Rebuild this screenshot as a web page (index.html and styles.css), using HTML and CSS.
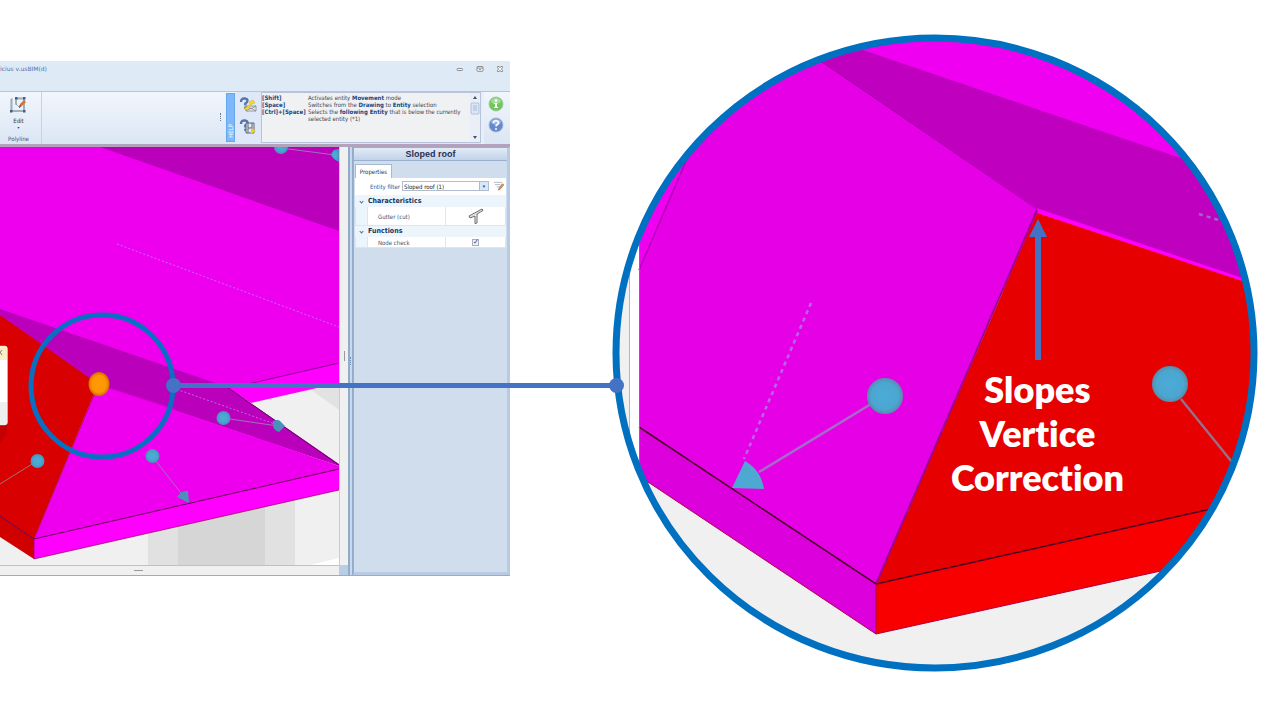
FILE: index.html
```html
<!DOCTYPE html>
<html lang="en">
<head>
<meta charset="utf-8">
<title>Slopes Vertice Correction</title>
<link rel="stylesheet" href="styles.css">
</head>
<body>
<main class="slide">
  <section class="window" aria-label="Edificius">
    <header class="titlebar">
      <span class="app-title">icius v.usBIM(d)</span>
      <div class="window-controls">
        <button type="button" aria-label="Minimize"><svg viewBox="0 0 8 8"><rect x="1" y="3.5" width="5.5" height="2" rx=".7"/></svg></button>
        <button type="button" aria-label="Restore"><svg viewBox="0 0 8 8"><rect x="1" y="1.5" width="6" height="4.8" rx=".7"/><path d="M1 3h6M3 4.5h2"/></svg></button>
        <button type="button" aria-label="Close"><svg viewBox="0 0 8 8"><path d="M1.5 1.5h1.7L4 2.7l.8-1.2h1.7v1.2L5.3 4l1.2 1.3v1.2H4.8L4 5.3l-.8 1.2H1.5V5.3L2.7 4 1.5 2.7z"/></svg></button>
      </div>
    </header>

    <div class="ribbon">
      <div class="ribbon-group">
        <button type="button" class="edit-button">
          <svg class="edit-icon" viewBox="0 0 18 18"><path d="M2 2v13h13M6 3h8v11M6 3v5l4 4" fill="none" stroke="#99a8b8"/><path d="M1 3v12h13V2H6v7" fill="none" stroke="#677785" stroke-width=".7"/><g fill="#3b6387"><rect x="5" y="1" width="2.5" height="2.5"/><rect x="13" y="1" width="2.5" height="2.5"/><rect x="0" y="14" width="2.5" height="2.5"/><rect x="13" y="14" width="2.5" height="2.5"/></g><path d="M9 12l1-4 4-4 2 2-4 4z" fill="#d77432"/><path d="M9 12l1-3 1 1z" fill="#493930"/></svg>
          <span>Edit</span><span class="drop">▾</span>
        </button>
        <span class="group-name">Polyline</span>
      </div>
      <span class="grip" aria-hidden="true"></span>
      <div class="help-strip"><span>HELP</span></div>
      <div class="help-tools">
        <button type="button" aria-label="Send a question"><svg viewBox="0 0 18 16"><path d="M2 5q0-4 4-3.5c4 .5 2.5 4 .3 5v2" fill="none" stroke="#5774ad" stroke-width="2.4"/><circle cx="6.3" cy="10.7" r="1.3" fill="#5774ad"/><path d="M7 9h10v5H7zM7 14l5-3 5 3M7 9l5 3 5-3" fill="#eee" stroke="#777" stroke-width=".7"/><path d="M5 12l6-5-1-2 4-2 2 3-3 1-5 6z" fill="#f3d52c" stroke="#c7aa23" stroke-width=".4"/></svg></button>
        <button type="button" aria-label="Video help"><svg viewBox="0 0 18 16"><path d="M2 5q0-4 4-3.5c4 .5 2.5 4 .3 5v2" fill="none" stroke="#5774ad" stroke-width="2.4"/><circle cx="6.3" cy="10.7" r="1.3" fill="#5774ad"/><path d="M7 4h8v10H7zM9 4v10M13 4v10M9 9h4" fill="#e6e9ef" stroke="#5c6578"/><path d="M12 9l5 3-5 3z" fill="#f5c929"/></svg></button>
      </div>
      <div class="help-box">
        <div class="help-text">
          <b>[Shift]</b><span>Activates entity <b>Movement</b> mode</span>
          <b>[Space]</b><span>Switches from the <b>Drawing</b> to <b>Entity</b> selection</span>
          <b>[Ctrl]+[Space]</b><span>Selects the <b>following Entity</b> that is below the currently selected entity (*1)</span>
        </div>
        <div class="scrollbar"><svg viewBox="0 0 10 49" preserveAspectRatio="none"><rect width="10" height="49" fill="#e9eef7"/><path d="M3 6l2-3 2 3zM3 43l2 3 2-3z" fill="#435069"/><rect x="1" y="10" width="8" height="11" rx="1" fill="#dce6f5" stroke="#9db1d0" stroke-width=".7"/><path d="M3 13h4M3 15h4M3 17h4" stroke="#8da0c0" stroke-width=".6"/></svg></div>
      </div>
      <div class="info-tools">
        <button type="button" aria-label="Information"><svg viewBox="0 0 16 16"><circle cx="8" cy="8" r="7" fill="#72c65c" stroke="#a4c9a7"/><ellipse cx="8" cy="5" rx="5" ry="3" fill="#a2dc95"/><circle cx="8" cy="4.5" r="1.3" fill="#fff"/><path d="M6 7h3v4h1v1H6v-1h1V8H6z" fill="#fff"/></svg></button>
        <button type="button" aria-label="Help"><svg viewBox="0 0 16 16"><circle cx="8" cy="8" r="7" fill="#6488cb" stroke="#a5b7da"/><ellipse cx="8" cy="5" rx="5" ry="3" fill="#9bb4e0"/><path d="M5.5 6q0-2.2 2.5-2.2T10.5 6q0 1-1.4 1.8-1.1.6-1.1 1.8" fill="none" stroke="#fff" stroke-width="1.6"/><circle cx="8" cy="12" r="1" fill="#fff"/></svg></button>
      </div>
    </div>

    <div class="workspace">
      <div class="viewport">
        <svg class="scene" viewBox="0 147 339 418" preserveAspectRatio="none" role="img" aria-label="Roof model">
          <defs>
            <radialGradient id="ball"><stop offset="0" stop-color="#4cafd9"/><stop offset=".65" stop-color="#49a5cf"/><stop offset="1" stop-color="#4991b8"/></radialGradient>
            <radialGradient id="orange"><stop offset="0" stop-color="#ff9c00"/><stop offset=".7" stop-color="#ff9500"/><stop offset="1" stop-color="#cf6d00"/></radialGradient>
          </defs>
          <rect y="147" width="339" height="418" fill="#f0f0f0"/>
          <path d="M148 500h30v65h-30zM265 500h30v65h-30z" fill="#e1e1e1"/>
          <path d="M178 500h87v65h-87z" fill="#d6d6d6"/>
          <path d="M310 389l29-7v28z" fill="#e2e2e2"/>
          <path d="M310 565l29-7v7z" fill="#fff"/>
          <path d="M0 147h339v216l-111 26L0 312z" fill="#ee00ee"/>
          <path d="M100 147h239v84z" fill="#bb00bb"/>
          <path d="M339 363l-111 25 23 15 88-20z" fill="#ff00ff"/>
          <path d="M339 363l-91 21" stroke="#8c008c" fill="none"/>
          <path d="M0 309l227 78 112 77v2L98 385 0 316z" fill="#bb00bb"/>
          <path d="M227 387l112 78" stroke="#660066" fill="none"/>
          <path d="M98 384l241 82v3L34 539z" fill="#ee00ee"/>
          <path d="M105 387l70 22" stroke="#d800d8" fill="none"/>
          <path d="M34 539l305-70v21L34 559z" fill="#ff00ff"/>
          <path d="M0 315l98 69-64 155-34-23z" fill="#d80000"/>
          <path d="M0 516l34 23v20L0 537z" fill="#d00000"/>
          <path d="M0 516l34 23 305-70" fill="none" stroke="#650050"/>
          <path d="M34 539v20l305-69M98 385L34 539" fill="none" stroke="#98004d" stroke-width=".7"/>
          <g fill="none" stroke="#c080ff" stroke-width=".8" stroke-dasharray="2 2"><path d="M117 244l222 83"/><path d="M173 388l102 36"/></g>
          <g fill="none" stroke="#9d72b9"><path d="M281 148l54 7M223 418l55 8M152 456l32 41"/><path d="M0 484l37-23" stroke="#997575"/></g>
          <g fill="url(#ball)"><circle cx="281" cy="147" r="7"/><circle cx="223.500" cy="418" r="7"/><circle cx="152.500" cy="456" r="7"/><circle cx="37.500" cy="461" r="7"/><path d="M339 149q-7 0-8 6 3 5 8 7z"/><path d="M273 421q5-2 7 0l5 5-6 6q-7-1-6-11zM177 497q4-7 11-6l1 12z"/></g>
          <path d="M0 425q5-2 7-8V432L0 444z" fill="#c40000"/>
          <rect x="-8" y="346" width="15.500" height="79" rx="3" fill="#fff" stroke="#d2caca" stroke-width=".5"/>
          <path d="M0 346h5q2 0 2 3v11H0z" fill="#f9edca"/><path d="M0 402h7v20q0 3-3 3H0z" fill="#eee"/>
          <path d="M-2 350l4 5M2 350l-4 5" stroke="#665f50" stroke-width=".8"/>
          <ellipse cx="99" cy="384" rx="10.500" ry="12" fill="url(#orange)"/>
        </svg>
        <div class="v-handle" aria-hidden="true"></div>
        <div class="h-handle" aria-hidden="true"></div>
        <div class="corner" aria-hidden="true"></div>
      </div>
      <div class="splitter" aria-hidden="true"></div>
      <aside class="panel">
        <h2>Sloped roof</h2>
        <div class="tabs"><button type="button">Properties</button></div>
        <div class="filter">
          <label for="entity">Entity filter</label>
          <div class="select-wrap"><select id="entity"><option>Sloped roof (1)</option></select></div>
          <button type="button" aria-label="Edit filter"><svg viewBox="0 0 12 10"><path d="M1 1h9M2 3.5h6M4 6h4M5 8.5h2" stroke="#9aa1a9" stroke-width=".8"/><path d="M6 9.5l1-3 3-4 2 1-4 5z" fill="#db9252" stroke="#806657" stroke-width=".5"/></svg></button>
        </div>
        <table class="properties">
          <colgroup><col class="col-fold"><col class="col-name"><col></colgroup>
          <tbody>
            <tr class="section"><th><span class="chevron"></span></th><th colspan="2">Characteristics</th></tr>
            <tr class="gutter"><td></td><td>Gutter (cut)</td><td><svg viewBox="0 0 16 16"><path d="M1 8L14 1l1 1.500-6 3.500v9l-2 .5V8l-5 2z" fill="#f7f7f7" stroke="#444" stroke-width=".8"/><path d="M2 9l12-6.500M8 8v7" stroke="#aaa" stroke-width=".5"/></svg></td></tr>
            <tr class="section"><th><span class="chevron"></span></th><th colspan="2">Functions</th></tr>
            <tr><td></td><td><label for="node">Node check</label></td><td><input id="node" type="checkbox" checked></td></tr>
          </tbody>
        </table>
      </aside>
    </div>
  </section>

  <figure class="detail">
    <svg viewBox="510 0 770 720" role="img" aria-label="Enlarged roof vertex">
      <defs><clipPath id="lens"><ellipse cx="935" cy="353" rx="319" ry="315"/></clipPath>
      <radialGradient id="large-ball"><stop offset="0" stop-color="#4bacd8"/><stop offset=".75" stop-color="#4ba6d0"/><stop offset="1" stop-color="#578cac"/></radialGradient></defs>
      <g clip-path="url(#lens)">
        <path d="M610 30h650v650H610z" fill="#f0f0f0"/>
        <path d="M629 30h10v450h-10z" fill="#fff"/><path d="M629.5 30v440" stroke="#a6b6dc"/>
        <path d="M639 30h621v260H639z" fill="#f000f0"/>
        <path d="M639 270l47-108V30h136l215 178-161 376-237-157z" fill="#e600e6"/>
        <path d="M780 23l40 38 217 147 223 76v-99L848 45z" fill="#bf00bf"/>
        <path d="M686 30h94l41 31-135 101z" fill="#e600e6"/>
        <path d="M639 270l47-109" stroke="#b600b6" stroke-width="1.5"/>
        <path d="M1037 209l223 75v3l-223-74z" fill="#ff00ff"/>
        <path d="M1037 213l223 74v212l-384 85z" fill="#e60000"/>
        <path d="M876 584l384-86v51l-384 85z" fill="#f80000"/>
        <path d="M639 427l237 157v50L639 476z" fill="#dc00dc"/>
        <path d="M1037 210L876 584" stroke="#a00090" stroke-width="2"/>
        <path d="M822 62l215 147" stroke="#ad00ad"/>
        <path d="M639 427l237 157 384-86" fill="none" stroke="#480024" stroke-width="1.5"/>
        <path d="M639 476l237 158 384-85M876 584v50" fill="none" stroke="#aa0046"/>
        <path d="M639.5 220v260" stroke="#9555c7"/>
        <path d="M811 303l-67 156" stroke="#b666ed" stroke-width="2.5" stroke-dasharray="4 4"/>
        <path d="M1199 214l29 9" stroke="#9c65c7" stroke-width="2.5" stroke-dasharray="4 4"/>
        <path d="M759 472l112-68" stroke="#a46bc8" stroke-width="2.5"/>
        <path d="M1181 399l55 68" stroke="#996e86" stroke-width="2.5"/>
        <circle cx="885" cy="396" r="18" fill="url(#large-ball)"/><circle cx="1170" cy="384" r="18" fill="url(#large-ball)"/>
        <path d="M732 488l13-27q16 9 19 28z" fill="#4da9d2"/>
      </g>
      <ellipse cx="935" cy="353" rx="319" ry="315" fill="none" stroke="#0070c0" stroke-width="7"/>
      <path d="M1035 360V237h-6l9-18 9 18h-6v123z" fill="#4472c4"/>
    </svg>
    <figcaption>Slopes<br>Vertice<br>Correction</figcaption>
  </figure>
  <svg class="connector" viewBox="0 0 1280 720" aria-hidden="true">
    <circle cx="102" cy="386" r="71" fill="none" stroke="#0a6fc2" stroke-width="5"/>
    <path d="M173 385.5h444" stroke="#4472c4" stroke-width="5"/><circle cx="173.5" cy="385.5" r="7.5" fill="#4472c4"/><circle cx="616.5" cy="385.5" r="7.5" fill="#4472c4"/>
  </svg>
</main>
</body>
</html>
```
FILE: styles.css
```css
* { box-sizing: border-box; }
body { margin: 0; background: #fff; font-family: "DejaVu Sans Condensed", "DejaVu Sans", sans-serif; font-size: 6px; color: #24344f; }
button { border: 0; padding: 0; background: none; color: inherit; font: inherit; }
svg { display: block; }
.slide { position: relative; display: grid; grid-template-columns: 51fr 77fr; align-items: start; overflow: hidden; }
.window { margin-top: 61px; min-width: 0; background: #dce8f6; }
.titlebar { display: flex; justify-content: space-between; align-items: start; height: 31px; padding: 4px 6px 0 0; border-bottom: 1px solid #b9c4d8; background: #deeaf6; }
.app-title { color: #526fae; font: 6px/8px "DejaVu Sans", sans-serif; }
.window-controls { display: flex; gap: 12px; }
.window-controls svg { width: 8px; height: 8px; fill: #f8f8f8; stroke: #777; stroke-width: .8; }
.ribbon { display: flex; height: 52px; background: linear-gradient(#f1f6fd, #dbe6f4); }
.ribbon-group { display: flex; flex-direction: column; align-items: center; justify-content: space-between; width: 42px; padding: 4px 4px 1px 0; border-right: 1px solid #c7d3e3; }
.edit-button { display: flex; flex-direction: column; align-items: center; line-height: 8px; }
.edit-icon { width: 18px; height: 18px; margin-bottom: 3px; }
.drop { font-size: 4px; line-height: 5px; }
.group-name { line-height: 9px; color: #3e5375; }
.grip { width: 2px; height: 8px; margin: 21px 4px 0 auto; border-left: 1px dotted #62758f; }
.help-strip { display: flex; align-items: end; justify-content: center; width: 9px; margin: 1px 0 2px; padding-bottom: 3px; background: #7eb7fa; border: 1px solid #66a7ed; color: #fff; }
.help-strip span { writing-mode: vertical-rl; transform: rotate(180deg); }
.help-tools { display: flex; flex-direction: column; gap: 6px; padding: 5px 2px 0 4px; width: 26px; background: #dfe8f9; }
.help-tools svg { width: 18px; height: 16px; }
.help-box { display: flex; height: 51px; width: 220px; border: 1px solid #b5c4da; background: #f0f1f3; }
.help-text { display: grid; flex: 1; grid-template-columns: 46px 1fr; align-content: start; line-height: 7px; padding-top: 1px; color: #41454d; }
.help-text b { color: #17457f; white-space: nowrap; }
.scrollbar { width: 10px; }
.scrollbar svg { width: 100%; height: 100%; }
.info-tools { display: flex; flex-direction: column; gap: 5px; width: 29px; padding: 4px 0 0 4px; border-left: 3px solid #e8eff9; }
.info-tools svg { width: 16px; height: 16px; }
.workspace { display: grid; grid-template-columns: 1fr 5px 157px; border-top: 3px solid #b2a2bd; border-bottom: 1px solid #91add0; }
.viewport { display: grid; grid-template-columns: 1fr 9px; grid-template-rows: auto 10px; }
.scene { width: 100%; height: auto; }
.v-handle, .h-handle { display: flex; align-items: center; justify-content: center; background: #f0f0f0; }
.v-handle { border-left: 1px solid #ccc; }
.v-handle::after { content: ""; width: 1px; height: 10px; background: #999; }
.h-handle { border-top: 1px solid #b6c3d4; }
.h-handle::after { content: ""; width: 9px; height: 1px; margin-right: 62px; background: #999; }
.corner { background: #b9cde4; }
.splitter { display: flex; align-items: center; background: #c7d9ee; border-left: 2px solid #91abc8; border-right: 1px solid #91abc8; }
.splitter::after { content: ""; height: 8px; border-left: 1px dotted #7190bb; }
.panel { border: 1px solid #99afca; border-right: 3px solid #b8cbe2; border-bottom: 3px solid #b8cbe2; background: #cfdded; }
.panel h2 { margin: 0 0 3px; height: 13px; font: bold 9px/13px "Liberation Sans", sans-serif; text-align: center; color: #1e3055; background: linear-gradient(#e2ecf8, #c0d2e9); border-bottom: 1px solid #9bb0cd; }
.tabs { padding-left: 1px; height: 14px; }
.tabs button { height: 14px; width: 37px; background: #fff; border: 1px solid #a8bad2; border-bottom: 0; }
.filter { display: flex; align-items: center; gap: 2px; height: 17px; margin: 0 1px; padding: 0 2px 1px 15px; background: #fff; }
.filter label { color: #37578e; }
.select-wrap { position: relative; flex: 1; margin-right: 2px; }
.select-wrap::after { content: "▾"; position: absolute; top: 1px; right: 1px; bottom: 1px; width: 8px; border-left: 1px solid #a9bbd3; background: #dae7f8; font-size: 5px; line-height: 8px; text-align: center; pointer-events: none; }
.filter select { display: block; width: 100%; height: 10px; padding: 0 1px; border: 1px solid #b1bdce; border-radius: 0; appearance: none; background: #fff; color: #222; font: inherit; }
.filter svg { width: 11px; height: 10px; }
.properties { width: calc(100% - 2px); margin-left: 1px; border-collapse: collapse; table-layout: fixed; background: #fff; color: #40536f; }
.col-fold { width: 12px; }
.col-name { width: 78px; }
.properties th, .properties td { height: 11px; padding: 0; border: 1px solid #dbe6f4; text-align: left; line-height: 7px; }
.properties .section th { border-color: #edf5fc; background: #edf5fc; color: #18335c; font-size: 7px; }
.properties td:first-child { background: #edf5fc; }
.properties td:nth-child(2) { padding-left: 10px; }
.properties .gutter td { height: 19px; }
.properties td svg { width: 16px; height: 16px; margin: auto; }
.chevron { display: block; width: 3px; height: 3px; margin-left: 4px; border: solid #526a8d; border-width: 0 1px 1px 0; transform: rotate(45deg); }
.properties input { appearance: none; display: block; width: 7px; height: 7px; margin: auto; border: 1px solid #a6b0bf; background: #edf1f7; }
.properties input:checked::after { content: "✓"; display: block; color: #263e75; font: bold 7px/5px "DejaVu Sans", sans-serif; }
.detail { position: relative; margin: 0; min-width: 0; }
.detail svg { width: 100%; height: auto; }
.detail figcaption { position: absolute; top: 51%; left: 50%; width: 37%; color: #fff; font: 800 36px/44px Lato, "Open Sans", sans-serif; font-variant-ligatures: none; text-align: center; }
.connector { position: absolute; top: 0; left: 0; width: 100%; height: auto; pointer-events: none; }
```
